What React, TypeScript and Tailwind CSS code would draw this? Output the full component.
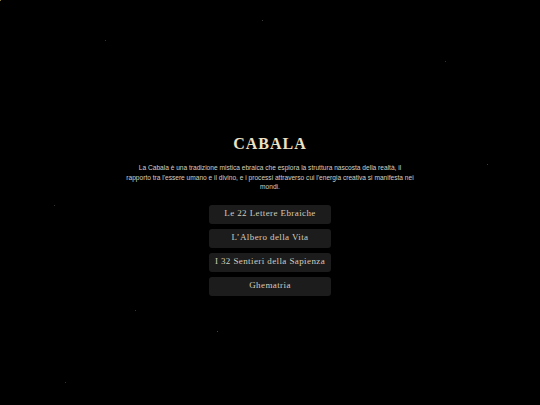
const stars = [
  { x: 0, y: 0, c: "bg-[#8a7a3a]" },
  { x: 262, y: 20, c: "bg-[#3a3a3a]" },
  { x: 105, y: 40, c: "bg-[#333]" },
  { x: 445, y: 61, c: "bg-[#333]" },
  { x: 487, y: 164, c: "bg-[#3a3a3a]" },
  { x: 54, y: 205, c: "bg-[#333]" },
  { x: 135, y: 310, c: "bg-[#333]" },
  { x: 217, y: 331, c: "bg-[#444]" },
  { x: 65, y: 382, c: "bg-[#333]" },
]

const sections = [
  "Le 22 Lettere Ebraiche",
  "L\u2019Albero della Vita",
  "I 32 Sentieri della Sapienza",
  "Ghematria",
]

export default function App() {
  return (
    <div className="relative min-h-screen w-full overflow-hidden bg-black">
      {stars.map((s, i) => (
        <span
          key={i}
          className={`absolute h-px w-px ${s.c}`}
          style={{ left: s.x, top: s.y }}
        />
      ))}

      <div className="relative flex flex-col items-center pt-[134px]">
        <h1 className="font-['Liberation_Serif',serif] text-[16px] leading-[20px] font-bold tracking-[1px] text-[#ebe1c5]">
          CABALA
        </h1>
        <p className="mt-[9px] w-[310px] text-center font-['Liberation_Sans',Arial,sans-serif] text-[6.6px] leading-[9.5px] text-[#d6d0c2]">
          La Cabala è una tradizione mistica ebraica che esplora la struttura nascosta della realtà, il
          <br />
          rapporto tra l'essere umano e il divino, e i processi attraverso cui l'energia creativa si manifesta nei
          <br />
          mondi.
        </p>

        <div className="mt-[13px] flex flex-col gap-[5px]">
          {sections.map((label) => (
            <button
              key={label}
              className="flex h-[19px] w-[122px] items-center justify-center rounded-[3px] bg-[#1c1c1c] font-['Liberation_Serif',serif] text-[9px] tracking-[0.4px] text-[#d4cdbd]"
            >
              {label}
            </button>
          ))}
        </div>
      </div>
    </div>
  )
}
